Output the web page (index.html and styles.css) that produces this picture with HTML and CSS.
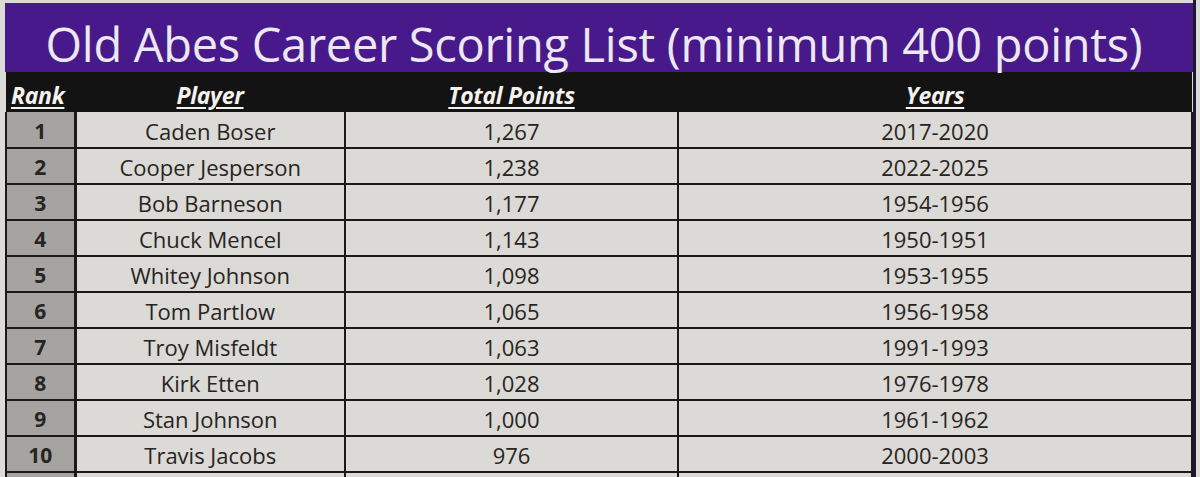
FILE: index.html
```html
<!DOCTYPE html>
<html>
<head>
<meta charset="utf-8">
<link rel="stylesheet" href="styles.css">
</head>
<body>
<div class="sheet">
  <div class="banner">Old Abes Career Scoring List (minimum 400 points)</div>
  <table class="list">
    <thead>
      <tr><th class="c-rank">Rank</th><th class="c-player">Player</th><th class="c-points">Total Points</th><th class="c-years">Years</th></tr>
    </thead>
    <tbody>
      <tr><td class="rank">1</td><td>Caden Boser</td><td>1,267</td><td>2017-2020</td></tr>
      <tr><td class="rank">2</td><td>Cooper Jesperson</td><td>1,238</td><td>2022-2025</td></tr>
      <tr><td class="rank">3</td><td>Bob Barneson</td><td>1,177</td><td>1954-1956</td></tr>
      <tr><td class="rank">4</td><td>Chuck Mencel</td><td>1,143</td><td>1950-1951</td></tr>
      <tr><td class="rank">5</td><td>Whitey Johnson</td><td>1,098</td><td>1953-1955</td></tr>
      <tr><td class="rank">6</td><td>Tom Partlow</td><td>1,065</td><td>1956-1958</td></tr>
      <tr><td class="rank">7</td><td>Troy Misfeldt</td><td>1,063</td><td>1991-1993</td></tr>
      <tr><td class="rank">8</td><td>Kirk Etten</td><td>1,028</td><td>1976-1978</td></tr>
      <tr><td class="rank">9</td><td>Stan Johnson</td><td>1,000</td><td>1961-1962</td></tr>
      <tr><td class="rank">10</td><td>Travis Jacobs</td><td>976</td><td>2000-2003</td></tr>
      <tr class="stub"><td class="rank"></td><td></td><td></td><td></td></tr>
    </tbody>
  </table>
</div>
</body>
</html>
```
FILE: styles.css
```css
html, body {
  margin: 0;
  padding: 0;
  background: #dddbd7;
  overflow: hidden;
}
body {
  width: 1200px;
  height: 477px;
  font-family: "Open Sans", "Liberation Sans", sans-serif;
  color: #272422;
}
.sheet {
  padding: 3px 0 0 5px;
  width: 1188px;
  height: 477px;
  box-sizing: content-box;
  overflow: hidden;
  border-right: 3px solid #1c1830;
}
.banner {
  background: #47198a;
  color: #ece8f2;
  height: 69px;
  box-sizing: border-box;
  padding: 13px 10px 0 0;
  font-size: 47px;
  line-height: 56px;
  text-align: center;
  letter-spacing: -0.3px;
  white-space: nowrap;
}
.list {
  width: 1188px;
  border-collapse: collapse;
  table-layout: fixed;
}
.list th {
  background: #141313;
  color: #f4f2ee;
  font-style: italic;
  font-weight: 700;
  font-size: 23px;
  letter-spacing: -0.3px;
  text-decoration: underline;
  text-underline-offset: 3px;
  text-decoration-thickness: 2px;
  height: 40px;
  box-sizing: border-box;
  padding: 6px 0 0;
  line-height: 30px;
  vertical-align: middle;
  text-align: center;
}
.c-rank { width: 69px; text-align: left !important; padding-left: 5px !important; }
.c-player { width: 270px; }
.c-points { width: 333px; }
.list td {
  background: #dcdad6;
  border: 2px solid #1b1a1a;
  height: 36px;
  padding: 2px 0 0;
  font-size: 22px;
  text-align: center;
  vertical-align: middle;
  line-height: 30px;
  box-sizing: border-box;
}
.list td.rank {
  background: #a6a4a0;
  font-weight: 700;
  font-size: 21px;
  border-right-width: 3px;
}
.list tbody tr:first-child td { border-top: none; }
```
